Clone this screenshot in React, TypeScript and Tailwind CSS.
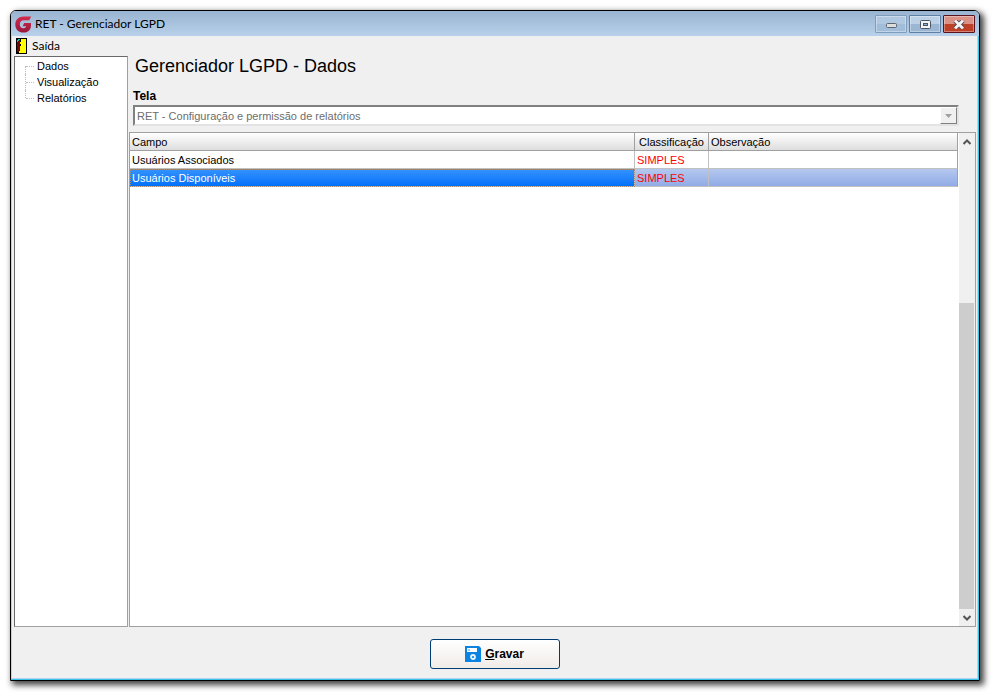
import React, { useState } from 'react';

interface FieldRow {
  id: number;
  field: string;
  classification: string;
  note: string;
}

const pages = ['Dados', 'Visualização', 'Relatórios'];

const rows: FieldRow[] = [
  { id: 1, field: 'Usuários Associados', classification: 'SIMPLES', note: '' },
  { id: 2, field: 'Usuários Disponíveis', classification: 'SIMPLES', note: '' },
];

const LogoIcon = () => (
  <svg width="17" height="17" viewBox="0 0 17 17" aria-hidden="true">
    <defs>
      <linearGradient id="logo" x1="0" y1="0" x2="0" y2="1">
        <stop offset="0" stopColor="#d52b4b" />
        <stop offset="1" stopColor="#961a3c" />
      </linearGradient>
    </defs>
    <path
      d="M16.2 0.4L14.2 4.2H8.6C6.2 4.2 4.8 6 4.8 8.2C4.8 10.6 6.4 12.2 8.4 12.2C10 12.2 10.9 11.4 11.1 10.2H7.6L9.2 6.9H16V9.4C16 13.8 12.8 16.6 8.4 16.6C3.6 16.6 0.3 13.2 0.3 8.4C0.3 3.6 3.8 0.4 8.6 0.4Z"
      fill="url(#logo)"
    />
  </svg>
);

const DoorIcon = () => (
  <svg width="11" height="16" viewBox="0 0 11 16" shapeRendering="crispEdges" aria-hidden="true">
    <rect width="11" height="16" fill="#000" />
    <path d="M5 1H10V15H3V13H5Z" fill="#ff0" />
    <path d="M1 3H4V13H3V14H1Z" fill="#7b0000" />
    <path d="M1 2H2V1H4V2H3V3H2V4H1Z" fill="#00c8c8" />
    <rect x="4" y="4" width="1" height="2" fill="#ff0" />
    <rect x="4" y="8" width="1" height="5" fill="#ff0" />
  </svg>
);

const SaveIcon = () => (
  <svg width="16" height="16" viewBox="0 0 16 16" aria-hidden="true">
    <path d="M0 0H14L16 2V16H0Z" fill="#0b83e3" />
    <rect x="2" y="2" width="10" height="4" fill="#fff" />
    <rect x="3" y="3" width="2" height="2" fill="#9ccbf4" />
    <circle cx="8" cy="11" r="2" fill="none" stroke="#e6f3fd" strokeWidth="1.8" />
  </svg>
);

const captionButton =
  'flex h-[18px] w-8 items-center justify-center rounded-[1px] border shadow-[inset_0_0_0_1px_rgba(255,255,255,0.35)]';

const TitleBar = () => (
  <header className="flex h-[25px] shrink-0 items-center bg-linear-to-b from-[#99b4d1] to-[#b9d1ea] pt-px pr-1 pl-1">
    <LogoIcon />
    <h1 className="ml-[3px] flex-1 font-['Lato',sans-serif] text-[12px] leading-4">RET - Gerenciador LGPD</h1>
    <div className="flex gap-0.5">
      <button
        type="button"
        aria-label="Minimizar"
        className={`${captionButton} border-[#7f9dbd] bg-linear-to-b from-[#b0c8e0] from-50% to-[#a2bdd9] to-50%`}
      >
        <svg width="11" height="8" viewBox="0 0 11 8">
          <rect x="0.5" y="3.5" width="10" height="4" rx="1" fill="#ddd" stroke="#5c6672" />
        </svg>
      </button>
      <button
        type="button"
        aria-label="Maximizar"
        className={`${captionButton} border-[#5f7fa3] bg-linear-to-b from-[#bcd1e6] from-50% to-[#9ab6d3] to-50%`}
      >
        <svg width="11" height="9" viewBox="0 0 11 9">
          <rect x="0.5" y="0.5" width="10" height="8" rx="1" fill="#f4f4f4" stroke="#4a5566" />
          <rect x="3.5" y="3.5" width="4" height="2" fill="#8fb0d0" stroke="#4a5566" />
        </svg>
      </button>
      <button
        type="button"
        aria-label="Fechar"
        className={`${captionButton} border-[#5a1420] bg-linear-to-b from-[#dc9186] from-50% to-[#bf4028] to-50%`}
      >
        <svg width="12" height="9" viewBox="0 0 12 9">
          <path d="M2 0.5L10 8.5M10 0.5L2 8.5" stroke="#5b4c58" strokeWidth="4.6" />
          <path d="M2 0.5L10 8.5M10 0.5L2 8.5" stroke="#f4f4f4" strokeWidth="2.8" />
        </svg>
      </button>
    </div>
  </header>
);

const PageTree = () => (
  <nav className="w-[114px] shrink-0 border border-t-[#696969] border-r-[#a0a0a0] border-b-[#a0a0a0] border-l-[#696969] bg-white">
    <ul className="pt-px pl-2.5">
      {pages.map((page, index) => (
        <li key={page} className="flex h-4">
          <span
            className={`w-px border-l border-dotted border-[#c0c0c0] ${
              index === 0 ? 'mt-2 h-2' : index === pages.length - 1 ? 'h-2' : 'h-4'
            }`}
          />
          <span className="mt-2 h-px w-2 border-t border-dotted border-[#c0c0c0]" />
          <a href="#" className="ml-[3px] text-[11px] leading-4">
            {page}
          </a>
        </li>
      ))}
    </ul>
  </nav>
);

const ScrollBar = () => (
  <div className="ml-px flex w-4 shrink-0 flex-col bg-[#f0f0f0]">
    <button type="button" aria-label="Rolar para cima" className="flex h-[17px] shrink-0 items-center justify-center">
      <svg width="8" height="6" viewBox="0 0 8 6">
        <path d="M0.5 5L4 1.5L7.5 5" fill="none" stroke="#555" strokeWidth="2" />
      </svg>
    </button>
    <div className="flex-1 basis-[153px]" />
    <div className="mr-px flex-1 basis-[306px] grow-[2] bg-[#cdcdcd]" />
    <button type="button" aria-label="Rolar para baixo" className="flex h-[17px] shrink-0 items-center justify-center">
      <svg width="8" height="6" viewBox="0 0 8 6">
        <path d="M0.5 1L4 4.5L7.5 1" fill="none" stroke="#555" strokeWidth="2" />
      </svg>
    </button>
  </div>
);

const FieldTable = () => {
  const [selected, setSelected] = useState(2);

  return (
    <table className="w-full table-fixed border-separate border-spacing-0 text-[11px] leading-4">
      <colgroup>
        <col />
        <col className="w-[74px]" />
        <col className="w-[249px]" />
      </colgroup>
      <thead>
        <tr className="h-[18px] bg-linear-to-b from-white to-[#dcdcdc] text-left">
          <th className="border-r border-b border-[#a0a0a0] p-0 pl-0.5 font-normal">Campo</th>
          <th className="border-r border-b border-[#a0a0a0] p-0 text-center font-normal">Classificação</th>
          <th className="border-r border-b border-[#a0a0a0] p-0 pl-0.5 font-normal">Observação</th>
        </tr>
      </thead>
      <tbody>
        {rows.map((row) => {
          const active = row.id === selected;
          const shade = active ? 'bg-linear-to-b from-[#b4c8ef] to-[#91abe6]' : '';
          return (
            <tr key={row.id} className="h-[18px]" onClick={() => setSelected(row.id)}>
              <td
                className={`border-r border-b border-[#c0c0c0] p-0 pl-0.5 ${
                  active
                    ? 'bg-linear-to-b from-[#3393ff] to-[#0070f8] text-white outline-1 -outline-offset-1 outline-dotted outline-[#a88a70]'
                    : ''
                }`}
              >
                {row.field}
              </td>
              <td className={`border-r border-b border-[#c0c0c0] p-0 pl-0.5 text-[#ff0000] ${shade}`}>
                {row.classification}
              </td>
              <td className={`border-r border-b border-r-[#a0a0a0] border-b-[#c0c0c0] p-0 pl-0.5 ${shade}`}>
                {row.note}
              </td>
            </tr>
          );
        })}
      </tbody>
    </table>
  );
};

const App: React.FC = () => {
  return (
    <div className="flex h-screen bg-white pt-2.5 pr-[11px] pb-[11px] pl-2.5 font-['Liberation_Sans',Arial,sans-serif] text-black">
      <div className="flex min-w-0 flex-1 flex-col overflow-hidden rounded-t-md border border-black shadow-[3px_3px_6px_1px_rgba(0,0,0,0.75)]">
        <TitleBar />
        <div className="flex min-h-0 flex-1 flex-col border-r border-b border-[#35c5e8]">
          <div className="flex min-h-0 flex-1 flex-col border-x border-b border-[#b9d1ea] bg-[#f0f0f0] pl-0.5">
            <div className="flex h-5 shrink-0 items-center">
              <button type="button" className="flex items-center gap-[5px] pl-0.5">
                <DoorIcon />
                <span className="font-['Lato',sans-serif] text-[12px] leading-4">Saída</span>
              </button>
            </div>

            <main className="flex min-h-0 flex-1">
              <PageTree />
              <section className="ml-px flex min-w-0 flex-1 flex-col">
                <h2 className="pl-1.5 text-[18px] leading-5">Gerenciador LGPD - Dados</h2>
                <label htmlFor="tela" className="mt-3 pl-1 text-[12px] leading-4 font-bold">
                  Tela
                </label>
                <div className="relative mt-px mr-[18px] ml-1">
                  <select
                    id="tela"
                    disabled
                    className="block h-[21px] w-full appearance-none border-2 border-t-[#808080] border-r-[#e3e3e3] border-b-[#e3e3e3] border-l-[#808080] bg-white pl-0.5 text-[11px] leading-4 text-[#6d6d6d] opacity-100"
                  >
                    <option>RET - Configuração e permissão de relatórios</option>
                  </select>
                  <span className="pointer-events-none absolute top-0.5 right-0.5 flex h-[17px] w-[17px] items-center justify-center border border-t-white border-r-[#808080] border-b-[#808080] border-l-white bg-[#f0f0f0]">
                    <svg width="7" height="4" viewBox="0 0 7 4">
                      <path d="M0 0H7L3.5 4Z" fill="#a0a0a0" />
                    </svg>
                  </span>
                </div>
                <div className="mt-1.5 mr-px flex min-h-0 flex-1 border border-[#a0a0a0] bg-white">
                  <div className="min-w-0 flex-1">
                    <FieldTable />
                  </div>
                  <ScrollBar />
                </div>
              </section>
            </main>

            <footer className="flex h-[51px] shrink-0 items-center justify-center pt-0.5 pr-0.5">
              <button
                type="button"
                className="flex h-[30px] w-[130px] items-center justify-center gap-1 rounded-[3px] border border-[#003c74] bg-linear-to-b from-white to-[#f0ece8] text-[12px] leading-4 font-bold"
              >
                <SaveIcon />
                <span>
                  <u>G</u>ravar
                </span>
              </button>
            </footer>
          </div>
        </div>
      </div>
    </div>
  );
};

export default App;
